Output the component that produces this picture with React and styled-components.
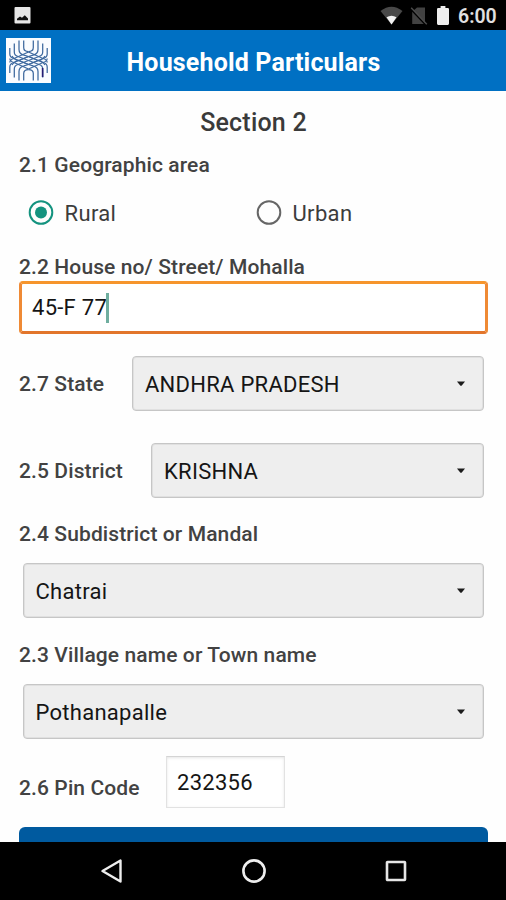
import React from "react";
import styled, { createGlobalStyle } from "styled-components";

const GlobalStyle = createGlobalStyle`
  *, *::before, *::after { box-sizing: border-box; }
  body { margin: 0; background: #fff; font-family: Roboto, sans-serif; }
`;

const Screen = styled.div`
  width: 506px;
  height: 900px;
  display: flex;
  flex-direction: column;
  overflow: hidden;
  background: #fefefe;
`;

const StatusBar = styled.header`
  flex: none;
  height: 30px;
  padding: 1px 9px 0 14px;
  display: flex;
  align-items: center;
  background: #000;
`;

const StatusIcons = styled.div`
  margin-left: auto;
  display: flex;
  align-items: center;
  gap: ${(p) => p.$gap}px;
`;

const Clock = styled.span`
  width: 39px;
  margin: 2px 0 0 1px;
  font-size: 19.5px;
  line-height: 28px;
  font-weight: 600;
  white-space: nowrap;
  color: #e0e0e0;
`;

const AppBar = styled.div`
  flex: none;
  height: 61px;
  padding: 0 6px;
  display: grid;
  grid-template-columns: 45px 1fr 45px;
  align-items: center;
  background: #0070c3;
`;

const Title = styled.h1`
  margin: 3px 0 0 1px;
  text-align: center;
  font-size: 25px;
  font-weight: 700;
  letter-spacing: 0.17px;
  white-space: nowrap;
  color: #fff;
`;

const Form = styled.main`
  flex: 1;
  min-height: 0;
  overflow: hidden;
  padding: 5px 18px 0 19px;
  display: flex;
  flex-direction: column;
`;

const Heading = styled.h2`
  flex: none;
  margin: 0;
  height: 53px;
  line-height: 54px;
  text-align: center;
  font-size: 25px;
  font-weight: 500;
  letter-spacing: 0.2px;
  color: #3a3a3a;
`;

const Label = styled.label`
  flex: none;
  margin-top: ${(p) => p.$top || 0}px;
  height: 28px;
  line-height: 28px;
  font-size: 21px;
  font-weight: 500;
  letter-spacing: 0.11px;
  white-space: nowrap;
  color: #424242;
`;

const RadioGroup = styled.div`
  flex: none;
  height: 66px;
  padding: 2px 0 0 9px;
  display: grid;
  grid-template-columns: 228px 1fr;
  align-items: center;
`;

const Radio = styled.div`
  display: flex;
  align-items: center;
  gap: 10.5px;
  font-size: 22px;
  line-height: 30px;
  letter-spacing: 0.35px;
  color: #3c3c3c;
`;

const RadioText = styled.span`
  padding-top: 1px;
`;

const FieldText = styled.span`
  padding-top: ${(p) => p.$drop || 1}px;
  font-size: 22px;
  line-height: 28px;
  letter-spacing: 0.27px;
  white-space: nowrap;
  color: #151515;
`;

const FocusedInput = styled.div`
  flex: none;
  height: 53px;
  padding: 0 10px;
  display: flex;
  align-items: center;
  border: 3px solid;
  border-color: #f6952c #ef8a35 #e2752b;
  border-radius: 4px;
  background: #fff;
`;

const Caret = styled.span`
  width: 2.5px;
  height: 30px;
  margin-left: -1px;
  background: #6fae9f;
`;

const Row = styled.div`
  flex: none;
  margin-top: ${(p) => p.$top}px;
  padding-right: 4px;
  display: grid;
  grid-template-columns: ${(p) => p.$label}px 1fr;
  align-items: center;
`;

const Select = styled.div`
  flex: none;
  height: 55px;
  margin: ${(p) => p.$margin || "0"};
  padding: 0 17px 0 ${(p) => p.$inset || 12}px;
  display: flex;
  align-items: center;
  justify-content: space-between;
  border: 1px solid #c6c6c6;
  border-radius: 4px;
  box-shadow: inset 0 0 0 1px #e0e0e0;
  background: #eee;
`;

const PinInput = styled.div`
  width: 119px;
  height: 52px;
  padding: 0 0 1px 10px;
  display: flex;
  align-items: center;
  border: 1px solid #e2e2e2;
  border-top-color: #d4d4d4;
  box-shadow: inset 0 1px 3px #e6e6e6;
  background: #fff;
`;

const SubmitButton = styled.div`
  flex: none;
  height: 55px;
  margin-top: 19px;
  border-radius: 6px;
  background: #005a9f;
`;

const NavBar = styled.nav`
  flex: none;
  height: 58px;
  padding: 0 97px 0 98px;
  display: flex;
  align-items: center;
  justify-content: space-between;
  background: #000;
`;

const PictureIcon = () => (
  <svg width="17" height="17" viewBox="0 0 17 17">
    <rect x="0.5" y="0" width="16" height="16.5" rx="1" fill="#e6e6e6" />
    <path d="M3 13.3V11.7L6 9.6L8 10.8L10.8 8.2L14 11.6V13.3Z" fill="#111" />
  </svg>
);

const WifiIcon = () => (
  <svg width="23" height="19" viewBox="0 0 23 19">
    <path d="M0.5 5Q11.5-3.5 22.5 5L11.5 18.5Z" fill="#484848" />
    <path d="M6.5 11.3Q11.5 8.2 16.5 11.3L11.5 18.5Z" fill="#f2f2f2" />
  </svg>
);

const NoSimIcon = () => (
  <svg width="18" height="18" viewBox="0 0 18 18">
    <path d="M3.6 3.4L7 0.5H15V17H2.2V5Z" fill="#424242" />
    <path d="M0.5 1.8L15.8 18" stroke="#000" strokeWidth="1.6" />
    <path d="M1.2 0.8L16.8 17.2" stroke="#4c4c4c" strokeWidth="1.4" />
  </svg>
);

const BatteryIcon = () => (
  <svg width="12" height="19" viewBox="0 0 12 19">
    <path d="M1.2 2H3.6V0H8.4V2H10.8Q12 2 12 3.2V17.6Q12 19 10.8 19H1.2Q0 19 0 17.6V3.2Q0 2 1.2 2Z" fill="#eee" />
  </svg>
);

const logoTails = [
  "M17.7 2.5V9.5Q17.7 13.5 22.5 13.5",
  "M13 2.5V11.5Q13 16 18 17.2L22.5 18.5",
  "M8.3 5.5V14Q8.3 17.5 12 18.5L22.5 22.5",
  "M3.8 10V16Q3.8 19.5 8 20.5L22.5 26.5",
];

const logoLattice = [
  "M3.8 24.5Q4 21.5 8 20.5L22.5 14",
  "M6 27Q9 22.5 14 22L22.5 18.5",
];

const LogoQuarter = () => (
  <>
    {logoTails.map((d) => <path key={d} d={d} />)}
    {logoLattice.map((d) => <path key={d} d={d} />)}
  </>
);

const Logo = () => (
  <svg width="45" height="45" viewBox="0 0 45 45">
    <rect width="45" height="45" fill="#fafcff" />
    <g fill="none" stroke="#3d689e" strokeWidth="1.25">
      <LogoQuarter />
      <g transform="translate(45 0) scale(-1 1)"><LogoQuarter /></g>
      <g transform="translate(0 45) scale(1 -1)"><LogoQuarter /></g>
      <g transform="translate(45 45) scale(-1 -1)"><LogoQuarter /></g>
    </g>
    <path d="M36.6 30V39" stroke="#241b72" strokeWidth="1.6" />
  </svg>
);

const RadioIcon = ({ on }) => (
  <svg width="26" height="26" viewBox="0 0 26 26">
    <circle cx="13" cy="12.5" r="11.3" fill="none" stroke={on ? "#14937f" : "#666"} strokeWidth="2" />
    {on && <circle cx="13" cy="12.5" r="6" fill="#14937f" />}
  </svg>
);

const Arrow = () => (
  <svg width="10" height="6" viewBox="0 0 10 6">
    <path d="M1 0.6H9L5.8 4.4Q5 5.1 4.2 4.4Z" fill="#1c1c1c" />
  </svg>
);

const Dropdown = ({ value, margin, inset }) => (
  <Select $margin={margin} $inset={inset}>
    <FieldText $drop={3}>{value}</FieldText>
    <Arrow />
  </Select>
);

export default function App() {
  return (
    <>
      <GlobalStyle />
      <Screen>
        <StatusBar>
          <PictureIcon />
          <StatusIcons $gap={8.5}>
            <StatusIcons $gap={7}>
              <WifiIcon />
              <NoSimIcon />
            </StatusIcons>
            <BatteryIcon />
            <Clock>6:00</Clock>
          </StatusIcons>
        </StatusBar>
        <AppBar>
          <Logo />
          <Title>Household Particulars</Title>
        </AppBar>
        <Form>
          <Heading>Section 2</Heading>
          <Label $top={2}>2.1 Geographic area</Label>
          <RadioGroup>
            <Radio><RadioIcon on /><RadioText>Rural</RadioText></Radio>
            <Radio><RadioIcon /><RadioText>Urban</RadioText></Radio>
          </RadioGroup>
          <Label $top={8}>2.2 House no/ Street/ Mohalla</Label>
          <FocusedInput>
            <FieldText>45-F 77</FieldText>
            <Caret />
          </FocusedInput>
          <Row $top={22} $label={113}>
            <Label>2.7 State</Label>
            <Dropdown value="ANDHRA PRADESH" />
          </Row>
          <Row $top={32} $label={132}>
            <Label>2.5 District</Label>
            <Dropdown value="KRISHNA" />
          </Row>
          <Label $top={22}>2.4 Subdistrict or Mandal</Label>
          <Dropdown value="Chatrai" margin="15px 4px 0" inset={11.5} />
          <Label $top={23}>2.3 Village name or Town name</Label>
          <Dropdown value="Pothanapalle" margin="15px 4px 0" inset={11.5} />
          <Row $top={17} $label={147}>
            <Label $top={11}>2.6 Pin Code</Label>
            <PinInput><FieldText $drop={3}>232356</FieldText></PinInput>
          </Row>
          <SubmitButton />
        </Form>
        <NavBar>
          <svg width="26" height="26" viewBox="0 0 26 26">
            <path d="M22.5 2.5V23.5L4.5 13Z" fill="none" stroke="#eee" strokeWidth="2.4" strokeLinejoin="round" />
          </svg>
          <svg width="26" height="26" viewBox="0 0 26 26">
            <circle cx="13" cy="13" r="10.6" fill="none" stroke="#eee" strokeWidth="2.6" />
          </svg>
          <svg width="26" height="26" viewBox="0 0 26 26">
            <rect x="4" y="4" width="18" height="18" rx="0.5" fill="none" stroke="#e6e6e6" strokeWidth="2.6" />
          </svg>
        </NavBar>
      </Screen>
    </>
  );
}
